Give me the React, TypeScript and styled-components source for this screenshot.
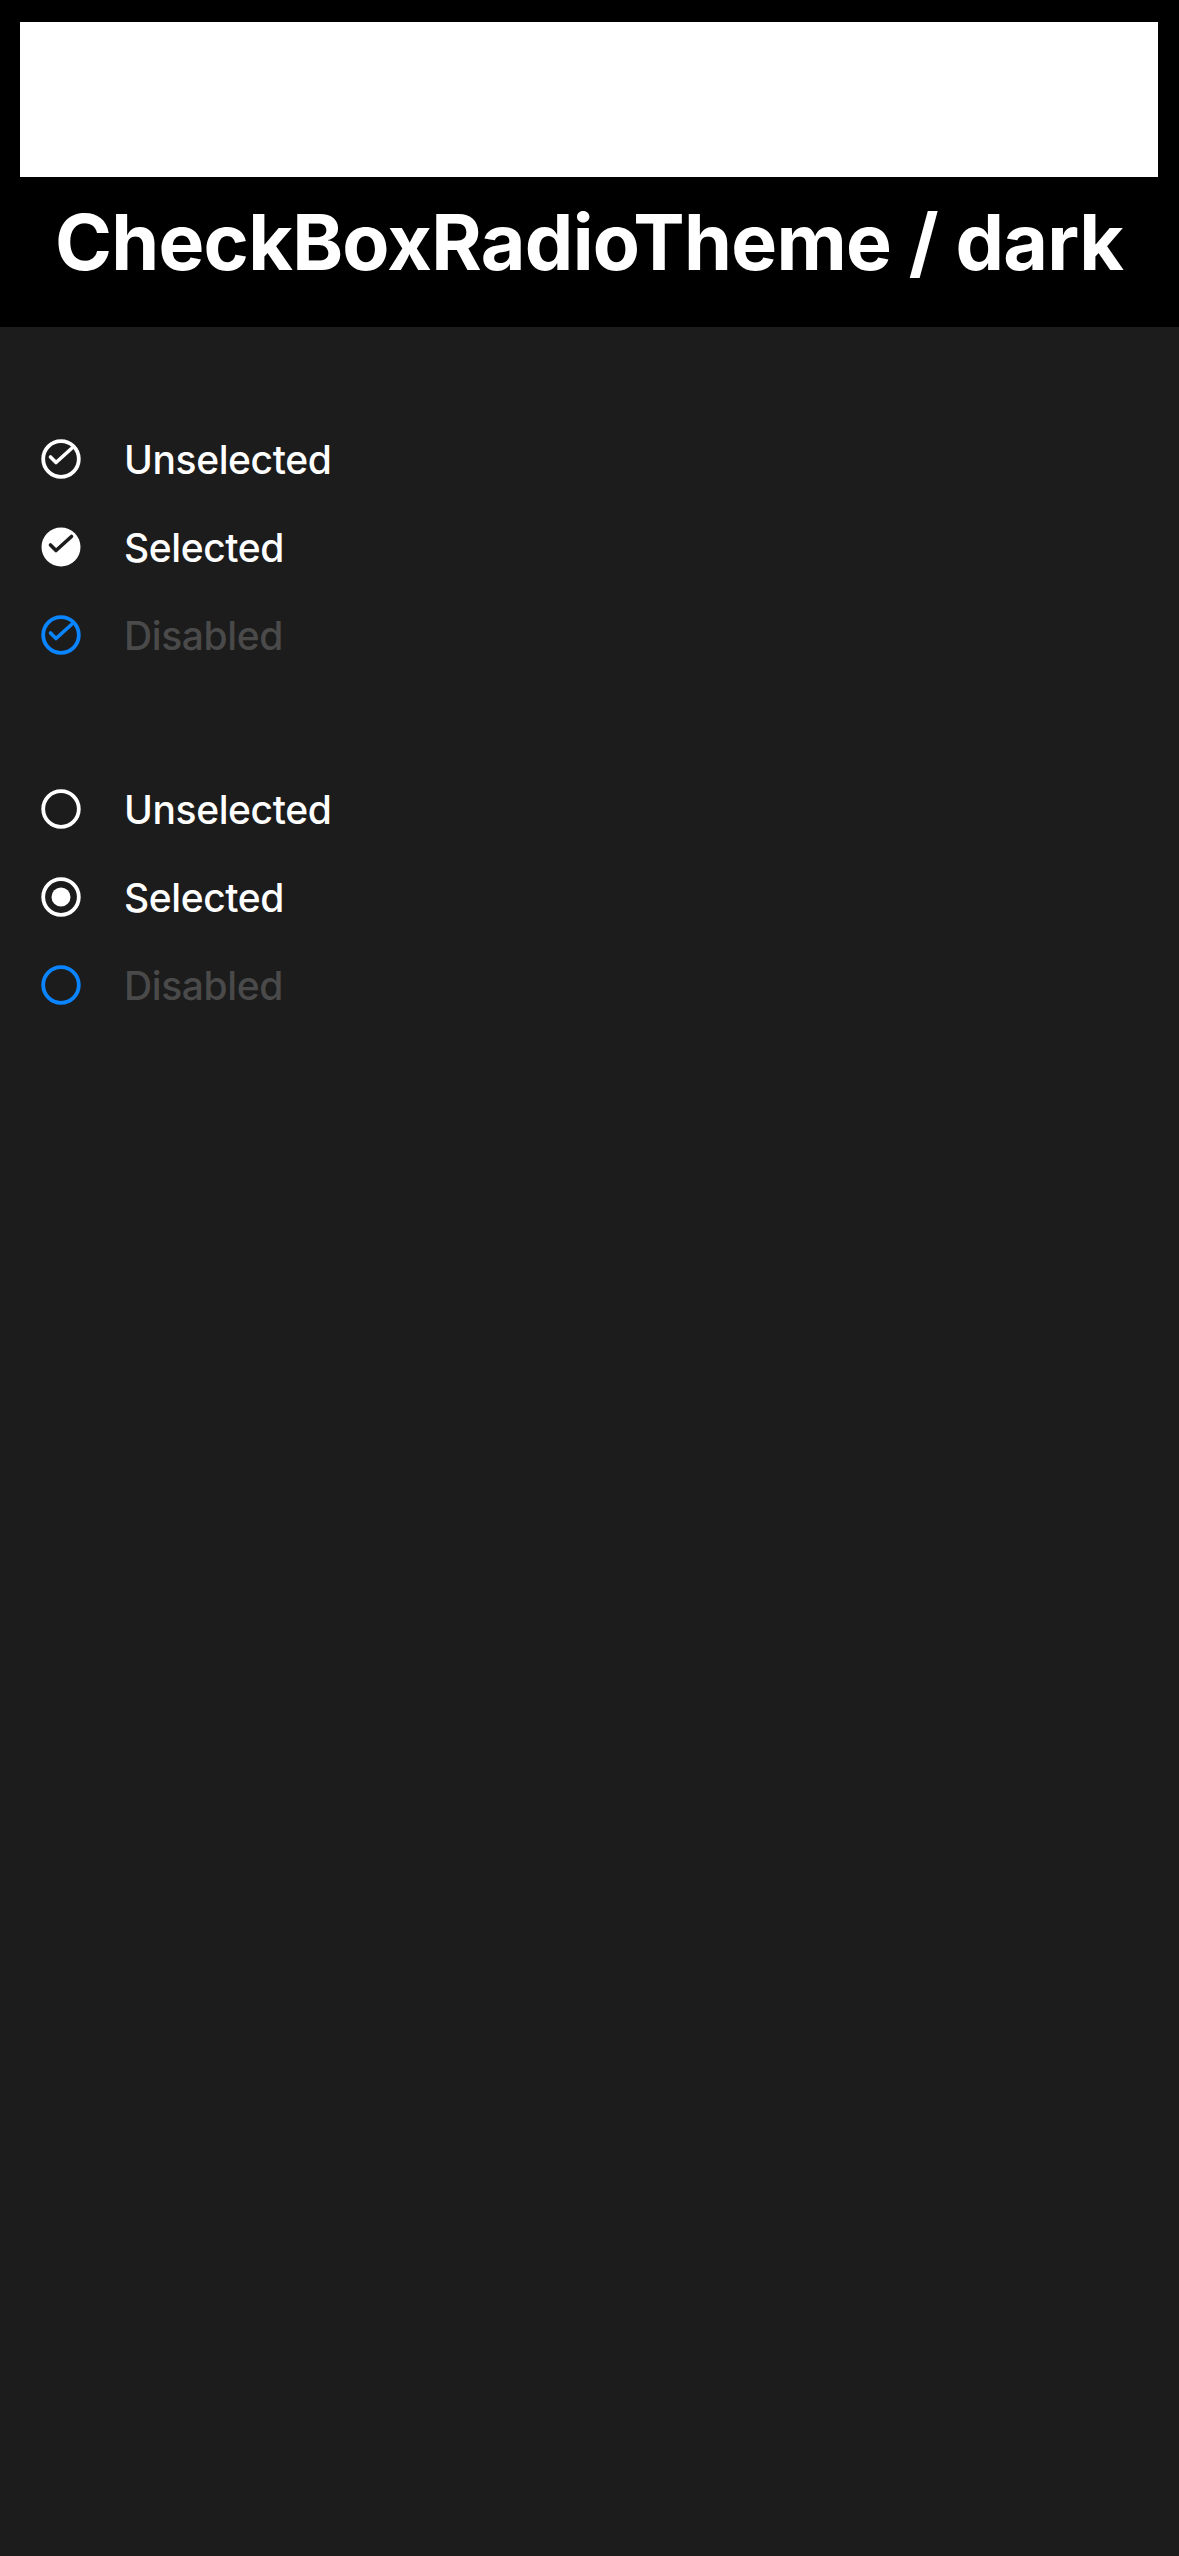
import React from "react";
import styled, { createGlobalStyle } from "styled-components";

const Global = createGlobalStyle`
  html, body { margin: 0; padding: 0; background: #1c1c1c; }
  body { font-family: Inter, "Noto Sans", sans-serif; }
`;

const Page = styled.div`
  min-height: 2556px;
  background: #1c1c1c;
  display: flex;
  flex-direction: column;
`;

const Header = styled.header`
  background: #000;
  padding: 22px 21px 0 20px;
  height: 327px;
  box-sizing: border-box;
  display: flex;
  flex-direction: column;
  align-items: stretch;
`;

const Banner = styled.div`
  height: 155px;
  background: #fff;
`;

const Title = styled.h1`
  margin: 0;
  margin-top: 19px;
  color: #fff;
  font-family: Inter, sans-serif;
  font-weight: 700;
  font-size: 77px;
  line-height: 92px;
  letter-spacing: -0.7px;
  text-align: center;
`;

const Content = styled.main`
  display: flex;
  flex-direction: column;
  gap: 86px;
  padding: 88px 0 0 41px;
`;

const Group = styled.div`
  display: flex;
  flex-direction: column;
`;

const Row = styled.div`
  height: 88px;
  display: flex;
  align-items: center;
  gap: 43px;
`;

const Label = styled.span<{ $disabled?: boolean }>`
  font-family: Inter, sans-serif;
  font-size: 39px;
  font-weight: 500;
  letter-spacing: -0.4px;
  color: ${(p) => (p.$disabled ? "#4a4a4a" : "#fff")};
`;

const IconBox = styled.svg`
  width: 40px;
  height: 40px;
  flex: none;
`;

type Kind = "check" | "radio";
type State = "off" | "on" | "disabled";

const CHECK = "M9.5 18 L15 23.5 L30.5 9.5";

const Icon = ({ kind, state }: { kind: Kind; state: State }) => {
  const color = state === "disabled" ? "#0a84ff" : "#ffffff";
  if (kind === "check") {
    if (state === "on") {
      return (
        <IconBox viewBox="0 0 40 40">
          <circle cx="20" cy="20" r="19.5" fill="#fff" />
          <path d={CHECK} fill="none" stroke="#1c1c1c" strokeWidth="3.6" strokeLinecap="round" strokeLinejoin="round" />
        </IconBox>
      );
    }
    return (
      <IconBox viewBox="0 0 40 40">
        <circle cx="20" cy="20" r="17.8" fill="none" stroke={color} strokeWidth="3.8" />
        <path d={CHECK} fill="none" stroke={color} strokeWidth="3.6" strokeLinecap="round" strokeLinejoin="round" />
      </IconBox>
    );
  }
  return (
    <IconBox viewBox="0 0 40 40">
      <circle cx="20" cy="20" r="17.8" fill="none" stroke={color} strokeWidth="3.8" />
      {state === "on" && <circle cx="20" cy="20" r="9.5" fill="#fff" />}
    </IconBox>
  );
};

const items: { state: State; label: string }[] = [
  { state: "off", label: "Unselected" },
  { state: "on", label: "Selected" },
  { state: "disabled", label: "Disabled" },
];

export default function App() {
  return (
    <Page>
      <Global />
      <Header>
        <Banner />
        <Title>CheckBoxRadioTheme / dark</Title>
      </Header>
      <Content>
        {(["check", "radio"] as Kind[]).map((kind) => (
          <Group key={kind}>
            {items.map((it) => (
              <Row key={it.label}>
                <Icon kind={kind} state={it.state} />
                <Label $disabled={it.state === "disabled"}>{it.label}</Label>
              </Row>
            ))}
          </Group>
        ))}
      </Content>
    </Page>
  );
}
